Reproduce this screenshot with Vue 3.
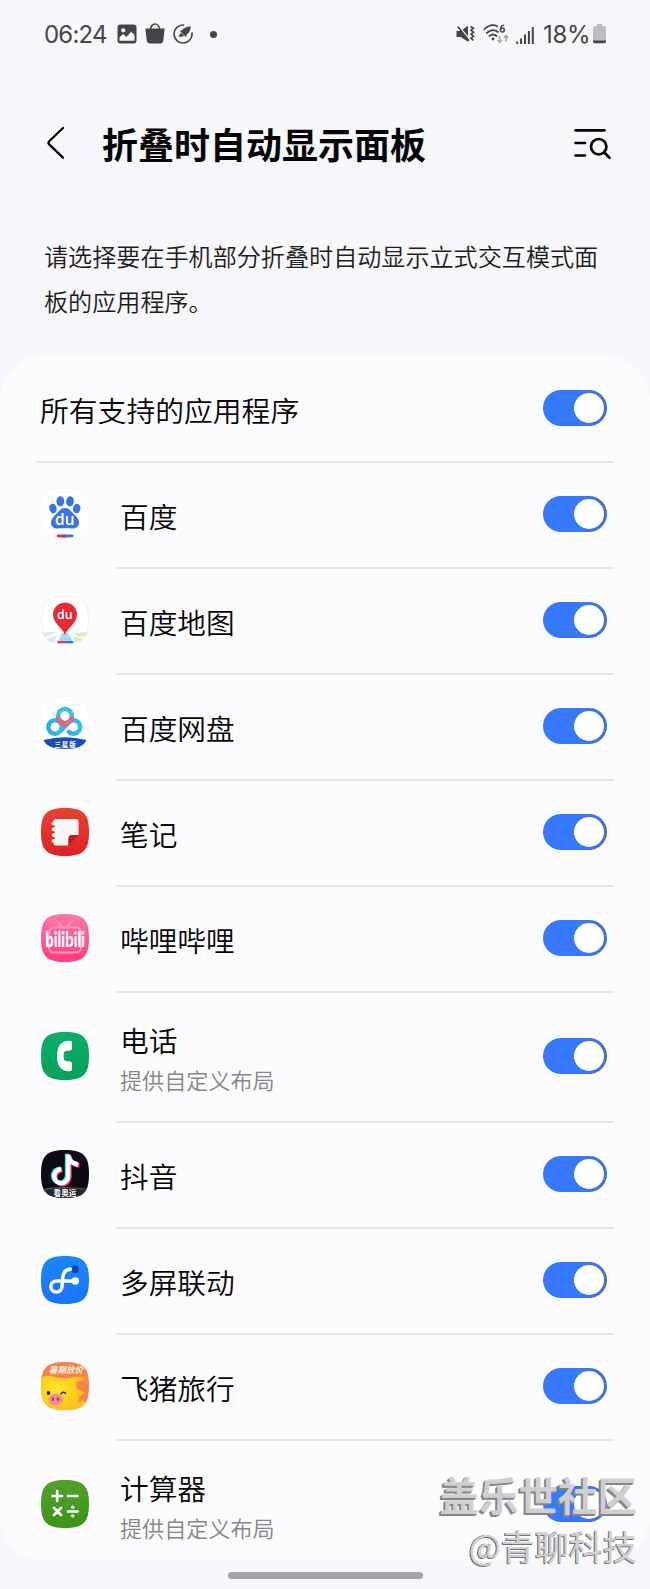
<script setup>
import { ref } from 'vue'

// 应用列表
const apps = ref([
  { id: 'baidu', name: '百度', on: true },
  { id: 'map', name: '百度地图', on: true },
  { id: 'pan', name: '百度网盘', on: true },
  { id: 'notes', name: '笔记', on: true },
  { id: 'bili', name: '哔哩哔哩', on: true },
  { id: 'phone', name: '电话', desc: '提供自定义布局', on: true },
  { id: 'douyin', name: '抖音', on: true },
  { id: 'flow', name: '多屏联动', on: true },
  { id: 'fliggy', name: '飞猪旅行', on: true },
  { id: 'calc', name: '计算器', desc: '提供自定义布局', on: true }
])

const allOn = ref(true)

// 总开关
const toggleAll = () => {
  allOn.value = !allOn.value
  apps.value.forEach((app) => { app.on = allOn.value })
}

// 单个应用开关
const toggleApp = (app) => {
  app.on = !app.on
  allOn.value = apps.value.every((item) => item.on)
}
</script>

<template>
  <div class="page">
    <!-- 状态栏 -->
    <div class="status-bar">
      <span class="clock">06:24</span>
      <svg class="st-icon" viewBox="0 0 20 20">
        <rect x="0.5" y="0.5" width="19" height="19" rx="3" fill="#454547" />
        <circle cx="6.3" cy="6.3" r="2.1" fill="#f6f6fb" />
        <path d="M2.5 16.8v-3.6l3.7-3.3 3.2 3 4.7-5.2 3.4 3.4v5.7z" fill="#f6f6fb" />
      </svg>
      <svg class="st-icon bag" viewBox="0 0 20 21">
        <path d="M0.3 5.5h19.4l-1.5 12.3q-.4 2.7-3.2 2.7H5q-2.8 0-3.2-2.7z" fill="#454547" />
        <path d="M5.5 7C5.5 -1 14.5 -1 14.5 7" fill="none" stroke="#454547" stroke-width="1.7" />
      </svg>
      <svg class="st-icon" viewBox="0 0 20 20">
        <path d="M10.5 1A9 9 0 1 0 19 9" fill="none" stroke="#454547" stroke-width="1.7" stroke-linecap="round" />
        <path d="M17.8 2.5q-6 0-8.800 4l-2.300.3 6.500 6.500.3-2.500q4-2.600 4.300-8.300z" fill="#454547" />
        <path d="M8 8.800l3.500 3.200-2.500.2-1 1.400-.8-1.100-1.800.3 1.500-2.500z" fill="#454547" />
      </svg>
      <i class="more-dot"></i>
      <div class="status-right">
        <svg class="mute" viewBox="0 0 19 18">
          <path d="M.5 6h4.200L12 .8v15.900L4.700 12H.5z" fill="#454547" />
          <path d="M1.5 -.5L14 15" stroke="#f6f6fb" stroke-width="1.5" />
          <path d="M1.7 1.5L13 15.8" stroke="#454547" stroke-width="1.7" />
          <path d="M14.5 1.5l3 1.700-2.500 2 2.500 2-2.500 2 2.500 2-2.500 2 2.500 2.300" fill="none" stroke="#454547" stroke-width="1.6" />
        </svg>
        <svg class="wifi" viewBox="0 0 27 20">
          <g fill="none" stroke="#454547" stroke-width="1.7" stroke-linecap="round">
            <path d="M1.3 5.5Q7.5 -1 14.3 2.3" />
            <path d="M3.7 9Q9.5 3.8 15 8" />
            <path d="M6.5 12Q10 9 13.5 12" />
            <path d="M20.5 1.3Q17.5 1.5 17.5 5.5" stroke-width="1.5" />
            <circle cx="19.4" cy="6" r="1.9" stroke-width="1.5" />
          </g>
          <circle cx="10" cy="15" r="1.4" fill="#454547" />
          <path d="M16.7 12v6M14.5 16l2.200 2.500L19 16M23 18v-6M20.7 14l2.300-2.500 2.300 2.500" fill="none" stroke="#aaaaae" stroke-width="1.5" />
        </svg>
        <svg class="signal" viewBox="0 0 18 18">
          <path d="M1.2 15.5V18M5.1 12.5V18M9 8.5V18M12.9 5V18M16.8 1V18" stroke="#454547" stroke-width="2" />
        </svg>
        <span class="percent">18%</span>
        <svg class="battery" viewBox="0 0 13 20">
          <path d="M4 0h5v2h2q2 0 2 2v13H0V4q0-2 2-2h2z" fill="#bdbdc1" />
          <path d="M0 16.500h13v.7q0 2-2 2H2q-2 0-2-2z" fill="#454547" />
        </svg>
      </div>
    </div>

    <!-- 标题栏 -->
    <header class="title-bar">
      <svg class="back" viewBox="0 0 18 34">
        <path d="M16 2L2.200 15.200q-1.400 1.600 0 3.200L16 31.600" fill="none" stroke="#050507" stroke-width="2.3" stroke-linecap="round" />
      </svg>
      <h1>折叠时自动显示面板</h1>
      <svg class="search" viewBox="0 0 38 32">
        <g fill="none" stroke="#050507" stroke-width="2.7" stroke-linecap="round">
          <path d="M2 2.300H31M2 15H11.500M2 27.500H11.500" />
          <circle cx="25.2" cy="18.7" r="7.7" />
          <path d="M30.800 24.500L36 29.700" />
        </g>
      </svg>
    </header>

    <p class="intro">请选择要在手机部分折叠时自动显示立式交互模式面板的应用程序。</p>

    <main class="card">
      <div class="row row-all">
        <span class="name">所有支持的应用程序</span>
        <button class="switch" :class="{ on: allOn }" @click="toggleAll"></button>
      </div>

      <div v-for="app in apps" :key="app.id" class="row" :class="{ tall: app.desc }">
        <svg class="app-icon" viewBox="0 0 48 48">
          <defs>
            <clipPath :id="'clip-' + app.id">
              <path d="M24 0C42.300 0 48 5.700 48 24S42.300 48 24 48 0 42.300 0 24 5.700 0 24 0Z" />
            </clipPath>
            <linearGradient id="g-pan" x2="1"><stop stop-color="#28aee8" /><stop offset="1" stop-color="#37c0ee" /></linearGradient>
            <linearGradient id="g-notes" x2="0" y2="1"><stop stop-color="#e5432f" /><stop offset="1" stop-color="#df2027" /></linearGradient>
            <linearGradient id="g-bili" x2="0" y2="1"><stop stop-color="#ff79a5" /><stop offset="1" stop-color="#fd3c7d" /></linearGradient>
            <linearGradient id="g-phone" x2="0" y2="1"><stop stop-color="#0caf69" /><stop offset="1" stop-color="#06a05a" /></linearGradient>
            <linearGradient id="g-flow" x2="0" y2="1"><stop stop-color="#1a87f7" /><stop offset="1" stop-color="#1a74fb" /></linearGradient>
            <linearGradient id="g-calc" x2="0" y2="1"><stop stop-color="#55a02f" /><stop offset="1" stop-color="#3b9417" /></linearGradient>
            <radialGradient id="g-pig" cx=".35" cy=".4" r=".7"><stop stop-color="#ffe82b" /><stop offset="1" stop-color="#fcbb16" /></radialGradient>
          </defs>

          <g :clip-path="`url(#clip-${app.id})`">
            <!-- 百度 -->
            <g v-if="app.id === 'baidu'">
              <rect width="48" height="48" fill="#fff" />
              <g fill="#3a73e6">
                <ellipse cx="12" cy="18.500" rx="3.700" ry="4.900" transform="rotate(-12 12 18.500)" />
                <ellipse cx="19.300" cy="11.300" rx="3.900" ry="5.100" />
                <ellipse cx="29" cy="11.300" rx="3.900" ry="5.100" transform="rotate(6 29 11.300)" />
                <ellipse cx="35.700" cy="18.500" rx="3.700" ry="4.900" transform="rotate(12 35.700 18.500)" />
                <path d="M24 18c4.500 0 6.300 3.700 9 6.300 3 2.800 5 4.900 5 8.200 0 4.500-3.500 6.500-7.500 6-4.200-.5-8.800-.5-13 0-4 .5-7.500-1.500-7.500-6 0-3.300 2-5.400 5-8.200 2.700-2.600 4.500-6.300 9-6.300z" />
              </g>
              <text x="23.800" y="35.300" class="du" font-size="15.500">du</text>
              <path d="M17 46h7" stroke="#d8363f" stroke-width="2.800" stroke-linecap="round" />
              <path d="M24 46h7" stroke="#3a73e6" stroke-width="2.800" stroke-linecap="round" />
              <path d="M22 46h2" stroke="#d8363f" stroke-width="2.800" />
            </g>

            <!-- 百度地图 -->
            <g v-else-if="app.id === 'map'">
              <rect width="48" height="48" fill="#fff" />
              <path d="M0 36h15l-6 4-9 1z" fill="#dfe8e4" />
              <path d="M2 44l14-5-3 9H5z" fill="#d6ebf0" />
              <path d="M16 48l5-11h6l7 11z" fill="#a9dbef" />
              <path d="M33 37l15-1v4l-11 1zM32 41l12 2-6 5h-3z" fill="#d7ebc0" />
              <path d="M24 39c-1.500-6-12-11.500-12-20.500a12 12 0 0 1 24 0C36 27.500 25.500 33 24 39z" fill="#eb2a34" />
              <text x="23.800" y="22.800" class="du" font-size="12.500">du</text>
              <path d="M17.500 46.300h7" stroke="#e23b48" stroke-width="2.800" stroke-linecap="round" />
              <path d="M24 46.300h7" stroke="#3a6fe6" stroke-width="2.800" stroke-linecap="round" />
              <path d="M22 46.300h2" stroke="#e23b48" stroke-width="2.800" />
              <path d="M24 .4C42 .4 47.600 6 47.600 24S42 47.600 24 47.600 .4 42 .4 24 6 .4 24 .4Z" fill="none" stroke="#e6e7e6" stroke-width=".8" />
            </g>

            <!-- 百度网盘 -->
            <g v-else-if="app.id === 'pan'">
              <rect width="48" height="48" fill="#fff" />
              <g fill="none" stroke-width="4.500">
                <circle cx="14" cy="25" r="6.700" stroke="url(#g-pan)" />
                <path d="M28 30a6.700 6.700 0 1 0-.5-9.500" stroke="url(#g-pan)" stroke-linecap="round" />
                <circle cx="24" cy="14" r="7" stroke="#3bc0ec" />
                <path d="M17 14.500a7 7 0 0 0 14 0" stroke="#f0607c" />
                <path d="M19 29.500l8.500-8.500" stroke="#4bb0e2" />
              </g>
              <path d="M18.500 20q5.500 3 11 0l-5.500 6z" fill="#f0607c" />
              <path d="M2.500 38Q24 32.500 45.500 38 42 47 24 47T2.500 38z" fill="#1b4db8" />
              <text x="24.500" y="44.500" class="ribbon" font-size="6.500" letter-spacing=".8">三星版</text>
            </g>

            <!-- 笔记 -->
            <g v-else-if="app.id === 'notes'">
              <rect width="48" height="48" fill="url(#g-notes)" />
              <path d="M15 11h20q2.500 0 2.500 2.500V27H31q-3.500 0-3.500 3.500V37.500H15q-2.500 0-2.500-2.500V13.500q0-2.500 2.500-2.500z" fill="#f8f7f6" />
              <path d="M12.300 15.500h3M12.300 21.300h3M12.300 27.200h3M12.300 33h3" stroke="#f8f7f6" stroke-width="3.400" stroke-linecap="round" />
              <path d="M12 18.400h1M12 24.200h1M12 30.100h1" stroke="#e2332b" stroke-width="1.800" stroke-linecap="round" />
              <path d="M27.500 37.500V30.500Q27.500 27 31 27h6.500z" fill="#b51e20" />
            </g>

            <!-- 哔哩哔哩 -->
            <g v-else-if="app.id === 'bili'">
              <rect width="48" height="48" fill="url(#g-bili)" />
              <g fill="none" stroke="#ff94b8" stroke-width="2.200" stroke-linecap="round">
                <rect x="8" y="13.500" width="32" height="25" rx="5" />
                <path d="M16 7.500l5 5M31 7.500l-5 5" />
              </g>
              <text x="0" y="0" transform="translate(24.200 32.500) scale(.78 1.100)" class="bili">bilibili</text>
            </g>

            <!-- 电话 -->
            <g v-else-if="app.id === 'phone'">
              <rect width="48" height="48" fill="url(#g-phone)" />
              <path d="M27 8.800h2q2 0 2 2v5.700q0 1.800-1.800 2l-4.400.5q-2.300.3-2.300 5t2.300 5l4.400.5q1.800.2 1.800 2v5.700q0 2-2 2h-2q-11-.7-11-15.200t11-15.200z" fill="#fff" />
            </g>

            <!-- 抖音 -->
            <g v-else-if="app.id === 'douyin'">
              <rect width="48" height="48" fill="#0c0b16" />
              <g fill="none" stroke-width="4.400">
                <path d="M27.200 4.500v21.800a7 7 0 1 1-7-7M27.200 5.500q1.500 8 10 9" stroke="#2de0df" transform="translate(-1.200 -.7)" />
                <path d="M27.200 4.500v21.800a7 7 0 1 1-7-7M27.200 5.500q1.500 8 10 9" stroke="#f0355c" transform="translate(1.300 1)" />
                <path d="M27.200 4.500v21.800a7 7 0 1 1-7-7M27.200 5.500q1.500 8 10 9" stroke="#fff" />
              </g>
              <path d="M0 40Q24 35 48 40v8H0z" fill="#29272e" />
              <path d="M2 39.500Q12 37.700 24 37.500" fill="none" stroke="#327b7b" stroke-width="1" />
              <path d="M24 37.500Q36 37.700 46 39.500" fill="none" stroke="#963753" stroke-width="1" />
              <text x="24" y="45.700" class="ribbon" font-size="7.600">看奥运</text>
            </g>

            <!-- 多屏联动 -->
            <g v-else-if="app.id === 'flow'">
              <rect width="48" height="48" fill="url(#g-flow)" />
              <circle cx="34" cy="13.300" r="3.800" fill="#0d45b5" />
              <path d="M29.500 13.200q-7 0-7.700 8.300l-.8 9a5.600 5.600 0 1 1-5-5.500H34" fill="none" stroke="#fff" stroke-width="3.400" stroke-linecap="round" />
              <circle cx="34.300" cy="25" r="3.700" fill="#fff" />
            </g>

            <!-- 飞猪旅行 -->
            <g v-else-if="app.id === 'fliggy'">
              <rect width="48" height="48" fill="#f7834a" />
              <path d="M0 16Q5 12.500 12 14.500 22 17.500 30 15.500q8-2 15 1-5 2.500-9 3-1 2-.5 6l3 10-5 12.500H0z" fill="url(#g-pig)" />
              <path d="M36 27q5 1 8 4-5 4-9 3zM34 42l7-4 4 3-6 7h-7z" fill="#fdc021" />
              <circle cx="7.500" cy="31" r="1.900" fill="#492514" />
              <path d="M20 32q1.500-3 4.500-.8" fill="none" stroke="#492514" stroke-width="1.500" stroke-linecap="round" />
              <ellipse cx="14.500" cy="37.500" rx="7" ry="5.700" fill="#fb8798" />
              <ellipse cx="12" cy="37.200" rx="1.200" ry="2" fill="#b93d50" />
              <ellipse cx="17" cy="37.200" rx="1.200" ry="2" fill="#b93d50" />
              <text x="25" y="11" class="promo">暑期放价</text>
            </g>

            <!-- 计算器 -->
            <g v-else>
              <rect width="48" height="48" fill="url(#g-calc)" />
              <path d="M11.500 16H21M16.200 11.200v9.600M27 16h9.500M13 28l7 7M20 28l-7 7M27 31.500h9.500" stroke="#fff" stroke-width="2.700" stroke-linecap="round" />
              <circle cx="31.700" cy="27.200" r="1.600" fill="#fff" />
              <circle cx="31.700" cy="35.800" r="1.600" fill="#fff" />
            </g>
          </g>
        </svg>
        <div class="row-main">
          <div class="labels">
            <span class="name">{{ app.name }}</span>
            <span v-if="app.desc" class="desc">{{ app.desc }}</span>
          </div>
          <button class="switch" :class="{ on: app.on }" @click="toggleApp(app)"></button>
        </div>
      </div>
    </main>

    <div class="home-bar"></div>

    <!-- 水印 -->
    <div class="watermark">
      <div class="wm-title">盖乐世社区</div>
      <div class="wm-user">@青聊科技</div>
    </div>
  </div>
</template>

<style>
body {
  margin: 0;
  background: #f6f6fb;
}
</style>

<style scoped>
.page {
  position: relative;
  width: 650px;
  height: 1589px;
  overflow: hidden;
  display: flex;
  flex-direction: column;
  background: #f6f6fb;
  color: #050507;
  font-family: "Noto Sans CJK SC", sans-serif;
}

/* 状态栏 */
.status-bar {
  height: 68px;
  flex-shrink: 0;
  box-sizing: border-box;
  padding: 0 44px;
  display: flex;
  align-items: center;
  color: #454547;
  font-family: Inter, Roboto, sans-serif;
}
.clock { width: 73px; font-size: 24px; letter-spacing: -0.8px; }
.st-icon { width: 20px; height: 20px; margin-right: 8px; }
.st-icon.bag { height: 21px; margin-top: -1px; }
.more-dot {
  width: 7px;
  height: 7px;
  margin-left: 9px;
  border-radius: 50%;
  background: #454547;
}
.status-right {
  margin-left: auto;
  display: flex;
  align-items: center;
}
.mute { width: 19px; height: 18px; margin-right: 8px; }
.wifi { width: 27px; height: 20px; margin-right: 6px; }
.signal { width: 18px; height: 18px; margin: 2px 9px 0 0; }
.percent { width: 50px; font-size: 24px; letter-spacing: -0.3px; }
.battery { width: 13px; height: 20px; }

/* 标题栏 */
.title-bar {
  height: 152px;
  flex-shrink: 0;
  box-sizing: border-box;
  padding: 0 38px 0 47px;
  display: flex;
  align-items: center;
}
.back { width: 18px; height: 34px; margin-bottom: 2px; }
h1 {
  flex: 1;
  margin: 0 0 2px 37px;
  font-size: 36px;
  line-height: 52px;
  font-weight: 700;
}
.search { width: 39px; height: 32px; }

.intro {
  margin: 14px 44px 0;
  height: 121px;
  flex-shrink: 0;
  font-size: 24.1px;
  line-height: 44.5px;
  font-weight: 350;
  color: #1c1c21;
}

/* 应用列表卡片 */
.card {
  height: 1206px;
  flex-shrink: 0;
  border-radius: 45px;
  overflow: hidden;
  background: #fcfcff;
}
.row {
  height: 106px;
  padding: 0 36px 0 41px;
  display: flex;
  align-items: center;
}
.row-main {
  flex: 1;
  height: 100%;
  box-sizing: border-box;
  margin-left: 27px;
  padding: 0 7px 2px 4px;
  border-bottom: 2px solid #e5e5e9;
  display: flex;
  align-items: center;
  justify-content: space-between;
}
.row:last-child .row-main { border-bottom-color: transparent; }
.row-all {
  height: 108px;
  box-sizing: border-box;
  margin: 0 36px;
  padding: 0 7px 0 4px;
  justify-content: space-between;
  border-bottom: 2px solid #e5e5e9;
}
.row.tall { height: 130px; }
.app-icon {
  width: 48px;
  height: 48px;
  flex-shrink: 0;
  margin-bottom: 4px;
}
.labels {
  display: flex;
  flex-direction: column;
}
.name {
  padding-top: 3px;
  font-size: 28.7px;
  line-height: 42px;
  font-weight: 350;
}
.row-all .name { font-size: 28.8px; }
.desc {
  font-size: 22.1px;
  line-height: 36px;
  font-weight: 350;
  color: #85858a;
}

/* 开关 */
.switch {
  width: 64px;
  height: 36px;
  flex-shrink: 0;
  padding: 3px;
  border: none;
  border-radius: 18px;
  background: #b9b9c0;
  display: flex;
  cursor: pointer;
}
.switch::after {
  content: '';
  width: 30px;
  height: 30px;
  border-radius: 50%;
  background: #fff;
}
.switch.on {
  justify-content: flex-end;
  background: linear-gradient(90deg, #3679fd 55%, #426fd8);
}

/* 图标内文字 */
.du {
  fill: #fff;
  font-family: "Open Sans", sans-serif;
  font-weight: 600;
  text-anchor: middle;
}
.ribbon {
  fill: #fff;
  font-weight: 700;
  text-anchor: middle;
}
.bili {
  fill: #fff;
  font-family: Lato, sans-serif;
  font-size: 19px;
  font-weight: 900;
  text-anchor: middle;
}
.promo {
  fill: #fff0df;
  font-size: 8.5px;
  font-weight: 700;
  font-style: italic;
  text-anchor: middle;
}

/* 底部手势条 */
.home-bar {
  width: 195px;
  height: 7px;
  margin: 11px auto 0;
  border-radius: 4px;
  background: #a5a5a8;
}

/* 水印 */
.watermark {
  position: absolute;
  right: 13px;
  bottom: 17px;
  text-align: right;
  white-space: nowrap;
  pointer-events: none;
}
.wm-title {
  font-size: 39.5px;
  line-height: 52px;
  font-weight: 700;
  color: rgba(212, 212, 214, 0.95);
  text-shadow: -1px 1px 0 #858587, -2px 2px 0 #858587;
}
.wm-user {
  font-size: 34px;
  line-height: 52px;
  font-weight: 400;
  color: #d0d0d3;
  text-shadow: -1px 1px 0 #727275, -1px 0 0 #727275;
}
</style>
